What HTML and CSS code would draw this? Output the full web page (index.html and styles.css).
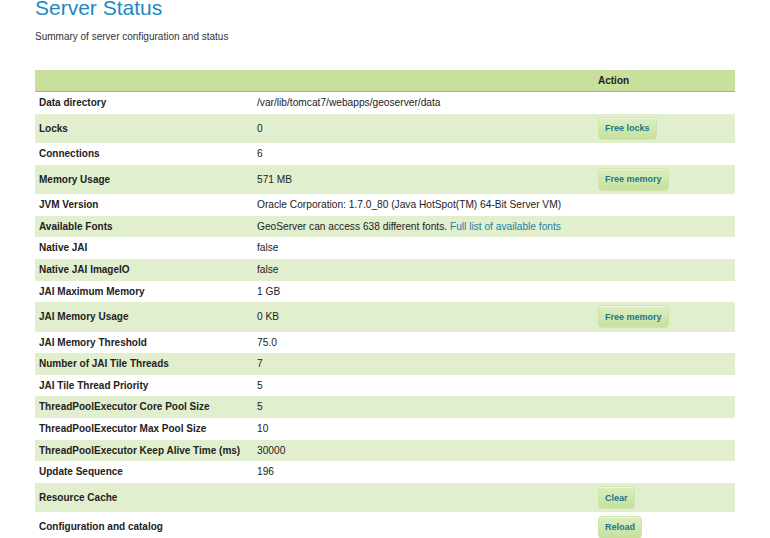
FILE: index.html
```html
<!DOCTYPE html>
<html>
<head>
<meta charset="utf-8">
<link rel="stylesheet" href="styles.css">
</head>
<body>
<div class="page">
  <h1 class="title">Server Status</h1>
  <p class="subtitle">Summary of server configuration and status</p>
  <table class="status">
    <colgroup><col class="c1"><col class="c2"><col class="c3"></colgroup>
    <thead>
      <tr><th></th><th></th><th>Action</th></tr>
    </thead>
    <tbody>
      <tr><td class="k">Data directory</td><td>/var/lib/tomcat7/webapps/geoserver/data</td><td></td></tr>
      <tr class="btnrow"><td class="k">Locks</td><td>0</td><td><button class="btn">Free locks</button></td></tr>
      <tr><td class="k">Connections</td><td>6</td><td></td></tr>
      <tr class="btnrow"><td class="k">Memory Usage</td><td>571 MB</td><td><button class="btn">Free memory</button></td></tr>
      <tr><td class="k">JVM Version</td><td>Oracle Corporation: 1.7.0_80 (Java HotSpot(TM) 64-Bit Server VM)</td><td></td></tr>
      <tr><td class="k">Available Fonts</td><td>GeoServer can access 638 different fonts. <a class="link" href="#">Full list of available fonts</a></td><td></td></tr>
      <tr><td class="k">Native JAI</td><td>false</td><td></td></tr>
      <tr><td class="k">Native JAI ImageIO</td><td>false</td><td></td></tr>
      <tr><td class="k">JAI Maximum Memory</td><td>1 GB</td><td></td></tr>
      <tr class="btnrow"><td class="k">JAI Memory Usage</td><td>0 KB</td><td><button class="btn">Free memory</button></td></tr>
      <tr><td class="k">JAI Memory Threshold</td><td>75.0</td><td></td></tr>
      <tr><td class="k">Number of JAI Tile Threads</td><td>7</td><td></td></tr>
      <tr><td class="k">JAI Tile Thread Priority</td><td>5</td><td></td></tr>
      <tr><td class="k">ThreadPoolExecutor Core Pool Size</td><td>5</td><td></td></tr>
      <tr><td class="k">ThreadPoolExecutor Max Pool Size</td><td>10</td><td></td></tr>
      <tr><td class="k">ThreadPoolExecutor Keep Alive Time (ms)</td><td>30000</td><td></td></tr>
      <tr><td class="k">Update Sequence</td><td>196</td><td></td></tr>
      <tr class="btnrow"><td class="k">Resource Cache</td><td></td><td><button class="btn">Clear</button></td></tr>
      <tr class="btnrow"><td class="k">Configuration and catalog</td><td></td><td><button class="btn">Reload</button></td></tr>
    </tbody>
  </table>
</div>
</body>
</html>
```
FILE: styles.css
```css
html, body {
  margin: 0;
  padding: 0;
  background: #ffffff;
  overflow: hidden;
}
body {
  font-family: "Liberation Sans", Arial, sans-serif;
  color: #222;
}
.page {
  padding: 0 35px;
  margin-top: -4px;
}
.title {
  margin: 0;
  font-size: 21px;
  font-weight: normal;
  line-height: 24px;
  color: #1f86c2;
}
.subtitle {
  margin: 10px 0 0;
  font-size: 10px;
  line-height: 14px;
  color: #333;
}
.status {
  margin-top: 26px;
  width: 700px;
  border-collapse: collapse;
  table-layout: fixed;
  font-size: 10.2px;
}
.c1 { width: 218px; }
.c2 { width: 341px; }
.c3 { width: 141px; }
.status th {
  background: #c9e09d;
  height: 21px;
  padding: 0 4px;
  text-align: left;
  font-size: 10px;
  font-weight: bold;
  color: #222;
  border-bottom: 1px solid #86b6cf;
}
.status td {
  padding: 4px 4px;
  line-height: 13.6px;
  color: #222;
  vertical-align: middle;
  white-space: nowrap;
}
.status td.k {
  font-size: 10px;
  font-weight: bold;
}
.status tbody tr:nth-child(even) td {
  background: #e2efcf;
}
.status tr.btnrow td {
  padding-top: 3px;
  padding-bottom: 3px;
  height: 23.5px;
}
.link {
  color: #1a82a8;
  text-decoration: none;
}
.btn {
  font-family: "Liberation Sans", Arial, sans-serif;
  font-size: 9px;
  font-weight: bold;
  color: #1d7590;
  height: 23px;
  padding: 0 6px;
  border: 1px solid #cfe5ad;
  border-radius: 4px;
  background: linear-gradient(#dcefc1, #c6e09d);
  box-shadow: inset 0 1px 0 rgba(255,255,255,0.5);
  cursor: pointer;
}
```
